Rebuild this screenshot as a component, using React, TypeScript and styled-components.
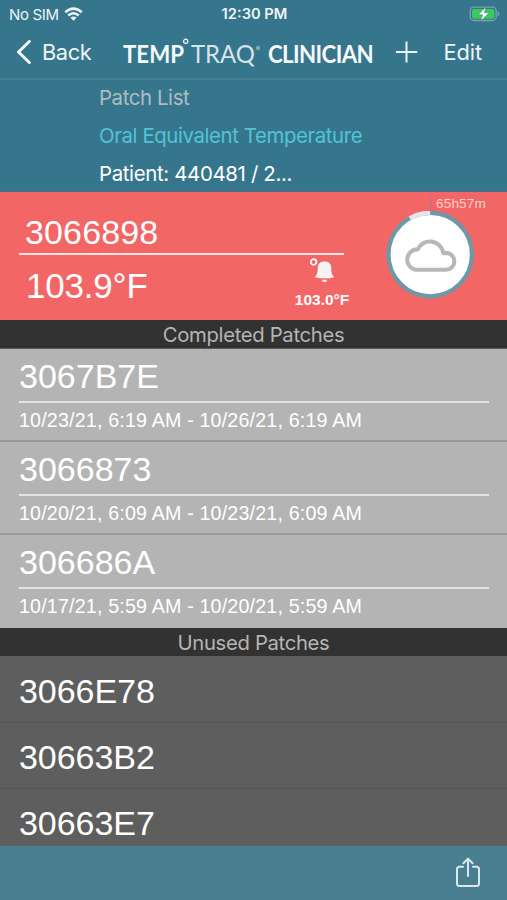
import React from "react";
import styled, { createGlobalStyle } from "styled-components";

const GlobalStyle = createGlobalStyle`
  * { box-sizing: border-box; }
  body { margin: 0; background: #36768d; }
`;

const ui = `Inter, "Liberation Sans", sans-serif`;
const helv = `"Liberation Sans", Arial, sans-serif`;

const Screen = styled.main`
  width: 507px;
  height: 900px;
  display: flex;
  flex-direction: column;
  overflow: hidden;
  background: #36768d;
  color: #fff;
  font-family: ${ui};
  white-space: nowrap;
`;

const Label = styled.span<{ $size: number; $track?: number; $weight?: number }>`
  font-size: ${(p) => p.$size}px;
  letter-spacing: ${(p) => p.$track ?? 0}px;
  font-weight: ${(p) => p.$weight ?? 400};
`;

const StatusBar = styled.div`
  height: 28px;
  flex: none;
  display: grid;
  grid-template-columns: 1fr auto 1fr;
  align-items: center;
  padding: 0 7px 0 9px;
  color: #edf4f6;
`;

const Carrier = styled.div`
  display: flex;
  align-items: center;
  gap: 5px;
`;

const BatteryIcon = styled.svg`
  justify-self: end;
`;

const NavBar = styled.nav`
  height: 52px;
  flex: none;
  display: flex;
  align-items: center;
  padding: 0 25px 3px 16px;
  border-bottom: 2px solid #42808f;
  color: #edf4f6;
`;

const BackButton = styled.div`
  width: 106px;
  flex: none;
  display: flex;
  align-items: center;
  gap: 11px;
`;

const Logo = styled.svg`
  flex: none;
  overflow: visible;
  font-family: Lato, sans-serif;
  fill: #f5f9fa;
`;

const AddIcon = styled.svg`
  flex: none;
  margin-left: 16px;
`;

const EditButton = styled.div`
  margin-left: auto;
`;

const PageInfo = styled.header`
  height: 112px;
  flex: none;
  padding-left: 99px;
  border-bottom: 1px solid #566c82;
`;

const InfoLine = styled.div<{ $color: string; $track: number }>`
  height: 38px;
  line-height: 36px;
  font-size: 20.4px;
  color: ${(p) => p.$color};
  letter-spacing: ${(p) => p.$track}px;
`;

const AlertCard = styled.section`
  height: 128px;
  flex: none;
  display: flex;
  background: #f36666;
  font-family: ${helv};
`;

const Reading = styled.div`
  width: 325px;
  margin-left: 19px;
  flex: none;
`;

const PatchId = styled.div`
  height: 63px;
  padding: 20px 0 0 6px;
  border-bottom: 2px solid #ffe4e2;
  font-size: 34px;
  line-height: 40px;
  letter-spacing: 0.15px;
`;

const ReadingRow = styled.div`
  display: flex;
`;

const Temperature = styled.div`
  width: 268px;
  flex: none;
  padding: 11px 0 0 7px;
  font-size: 35px;
  line-height: 40px;
  letter-spacing: -0.2px;
`;

const Threshold = styled.div`
  width: 70px;
  flex: none;
  display: flex;
  flex-direction: column;
  align-items: center;
  font-weight: 700;
  font-size: 15.5px;
  line-height: 19px;
`;

const BellIcon = styled.svg`
  margin: 3px 0 6px 0;
`;

const Connection = styled.div`
  width: 106px;
  height: 108px;
  margin-left: 42px;
  flex: none;
`;

const Remaining = styled.div`
  height: 16px;
  margin: 4px 0 -1px 44px;
  padding-left: 5px;
  border-left: 1px solid #ad7685;
  font-size: 13.5px;
  line-height: 16px;
  letter-spacing: 0.2px;
  color: #ffd2d0;
`;

const Ring = styled.svg`
  display: block;
`;

const SectionTitle = styled.h2`
  height: 29px;
  flex: none;
  margin: 0;
  border-bottom: 1px solid #5b5b5b;
  background: #323232;
  color: #b5b5b5;
  font-size: 20.3px;
  font-weight: 400;
  line-height: 30px;
  letter-spacing: -0.33px;
  text-align: center;
`;

const CompletedRow = styled.div`
  height: 93px;
  flex: none;
  padding: 0 18px 0 19px;
  background: #b4b4b4;
  border-bottom: 2px solid #999;
  font-family: ${helv};
  &:last-child { border-bottom: 0; }
`;

const CompletedId = styled.div`
  height: 54px;
  padding-top: 8px;
  border-bottom: 2px solid #e4e4e4;
  font-size: 34px;
  line-height: 39px;
`;

const Period = styled.div`
  height: 36px;
  font-size: 19.7px;
  line-height: 34px;
  letter-spacing: 0.16px;
`;

const List = styled.div`
  flex: none;
`;

const UnusedRow = styled.div`
  height: 66px;
  padding-left: 19px;
  border-bottom: 1px solid #52585a;
  background: #5e5e5e;
  font-family: ${helv};
  font-size: 34px;
  line-height: 69px;
  letter-spacing: -0.05px;
`;

const UnusedList = styled.div`
  height: 189px;
  flex: none;
  overflow: hidden;
`;

const Toolbar = styled.footer`
  flex: 1;
  display: flex;
  justify-content: flex-end;
  align-items: flex-start;
  padding: 11px 26px 0 0;
  background: #487e90;
`;

const completed = [
  { id: "3067B7E", period: "10/23/21, 6:19 AM - 10/26/21, 6:19 AM" },
  { id: "3066873", period: "10/20/21, 6:09 AM - 10/23/21, 6:09 AM" },
  { id: "306686A", period: "10/17/21, 5:59 AM - 10/20/21, 5:59 AM" },
];

const unused = ["3066E78", "30663B2", "30663E7"];

export default function App() {
  return (
    <Screen>
      <GlobalStyle />
      <StatusBar>
        <Carrier>
          <Label $size={15} $track={-0.35}>No SIM</Label>
          <svg width="19" height="14" viewBox="0 0 19 14" fill="none" stroke="#edf4f6" strokeWidth="2.5">
            <path d="M1.2 5.2Q9.5 -2 17.8 5.2" />
            <path d="M4.2 8.5Q9.5 4 14.8 8.5" />
            <path d="M9.5 13.7L6.5 10.7Q9.5 8.4 12.5 10.7Z" fill="#edf4f6" stroke="none" />
          </svg>
        </Carrier>
        <Label $size={14.7} $weight={600}>12:30 PM</Label>
        <BatteryIcon width="31" height="16" viewBox="0 0 31 16">
          <rect x="1.2" y="1.2" width="26" height="13.3" rx="3.8" fill="none" stroke="#7ba3ad" strokeWidth="1.3" />
          <rect x="3" y="3" width="22.4" height="9.7" rx="2" fill="#37cb5c" />
          <path d="M28.6 5.2Q30.4 6 30.4 7.8T28.6 10.4Z" fill="#7ba3ad" />
          <path d="M17 1L9 8.8H13.5L11.8 15L20 6.8H15.3Z" fill="#fff" stroke="#337e76" strokeWidth=".5" />
        </BatteryIcon>
      </StatusBar>
      <NavBar>
        <BackButton>
          <svg width="15" height="24" viewBox="0 0 15 24" fill="none" stroke="#f4f8f9" strokeWidth="3">
            <path d="M13.3 1.5L2.5 12L13.3 22.5" strokeLinecap="round" strokeLinejoin="round" />
          </svg>
          <Label $size={21.8} $track={-0.4}>Back</Label>
        </BackButton>
        <Logo width="256" height="34" viewBox="0 0 256 34">
          <text x="1" y="28" fontSize="25.5" fontWeight="700" textLength="61" lengthAdjust="spacingAndGlyphs">TEMP</text>
          <circle cx="63.7" cy="6.3" r="2.1" fill="none" stroke="#f5f9fa" strokeWidth="1.2" />
          <text x="69" y="28" fontSize="25.5" fontWeight="400" textLength="64" lengthAdjust="spacingAndGlyphs" fillOpacity=".85">TRAQ</text>
          <circle cx="136" cy="13" r="2.2" fill="#7fa9b9" />
          <text x="146" y="28" fontSize="25.5" fontWeight="700" letterSpacing="-.7" textLength="105" lengthAdjust="spacingAndGlyphs">CLINICIAN</text>
        </Logo>
        <AddIcon width="24" height="24" viewBox="0 0 24 24" stroke="#edf4f6" strokeWidth="2">
          <path d="M12.5 1.5V22.5M1.9 12H23.3" />
        </AddIcon>
        <EditButton><Label $size={21.8} $track={-0.1}>Edit</Label></EditButton>
      </NavBar>
      <PageInfo>
        <InfoLine $color="#b0bdc0" $track={-0.4}>Patch List</InfoLine>
        <InfoLine $color="#52c3d6" $track={-0.4}>Oral Equivalent Temperature</InfoLine>
        <InfoLine $color="#fff" $track={-0.34}>Patient: 440481 / 2...</InfoLine>
      </PageInfo>
      <AlertCard>
        <Reading>
          <PatchId>3066898</PatchId>
          <ReadingRow>
            <Temperature>103.9°F</Temperature>
            <Threshold>
              <BellIcon width="26" height="26" viewBox="0 0 26 26" fill="#f7f2f4">
                <circle cx="4.6" cy="4" r="2.8" fill="none" stroke="#fff" strokeWidth="1.7" />
                <path d="M15.5 3.5C10.8 3.5 8.7 6 8.7 10.5C8.7 15.5 8 16.8 5.7 19C8 20.8 23 20.8 25.3 19C23 16.8 22.3 15.5 22.3 10.5C22.3 6 20.2 3.5 15.5 3.5Z" />
                <path d="M12.8 21.7H18.2Q17.8 24.3 15.5 24.3T12.8 21.7Z" />
              </BellIcon>
              103.0°F
            </Threshold>
          </ReadingRow>
        </Reading>
        <Connection>
          <Remaining>65h57m</Remaining>
          <Ring width="90" height="90" viewBox="0 0 90 90">
            <circle cx="44.2" cy="43.6" r="41.7" fill="#fff" stroke="#6d98a8" strokeWidth="4.2" />
            <path d="M23.8 7.2A41.7 41.7 0 0 1 44.2 1.9" fill="none" stroke="#e9e3e5" strokeWidth="4.6" />
            <path d="M30 58.7H60A8.4 8.4 0 0 0 60 41.9L57.4 42.1A13.6 13.6 0 0 0 31.6 38.4A10.2 10.2 0 0 0 30 58.7Z" fill="none" stroke="#b8b8b8" strokeWidth="4.1" strokeLinejoin="round" />
          </Ring>
        </Connection>
      </AlertCard>
      <SectionTitle>Completed Patches</SectionTitle>
      <List>
        {completed.map((patch) => (
          <CompletedRow key={patch.id}>
            <CompletedId>{patch.id}</CompletedId>
            <Period>{patch.period}</Period>
          </CompletedRow>
        ))}
      </List>
      <SectionTitle>Unused Patches</SectionTitle>
      <UnusedList>
        {unused.map((id) => <UnusedRow key={id}>{id}</UnusedRow>)}
      </UnusedList>
      <Toolbar>
        <svg width="26" height="32" viewBox="0 0 26 32" fill="none" stroke="#d8e9ec" strokeWidth="2" strokeLinecap="round" strokeLinejoin="round">
          <path d="M8 9.8H4.5Q2 9.8 2 12.3V26.5Q2 29 4.5 29H21.5Q24 29 24 26.5V12.3Q24 9.8 21.5 9.8H18" />
          <path d="M13 19V1.8M8.4 6.2L13 1.6L17.6 6.2" />
        </svg>
      </Toolbar>
    </Screen>
  );
}
